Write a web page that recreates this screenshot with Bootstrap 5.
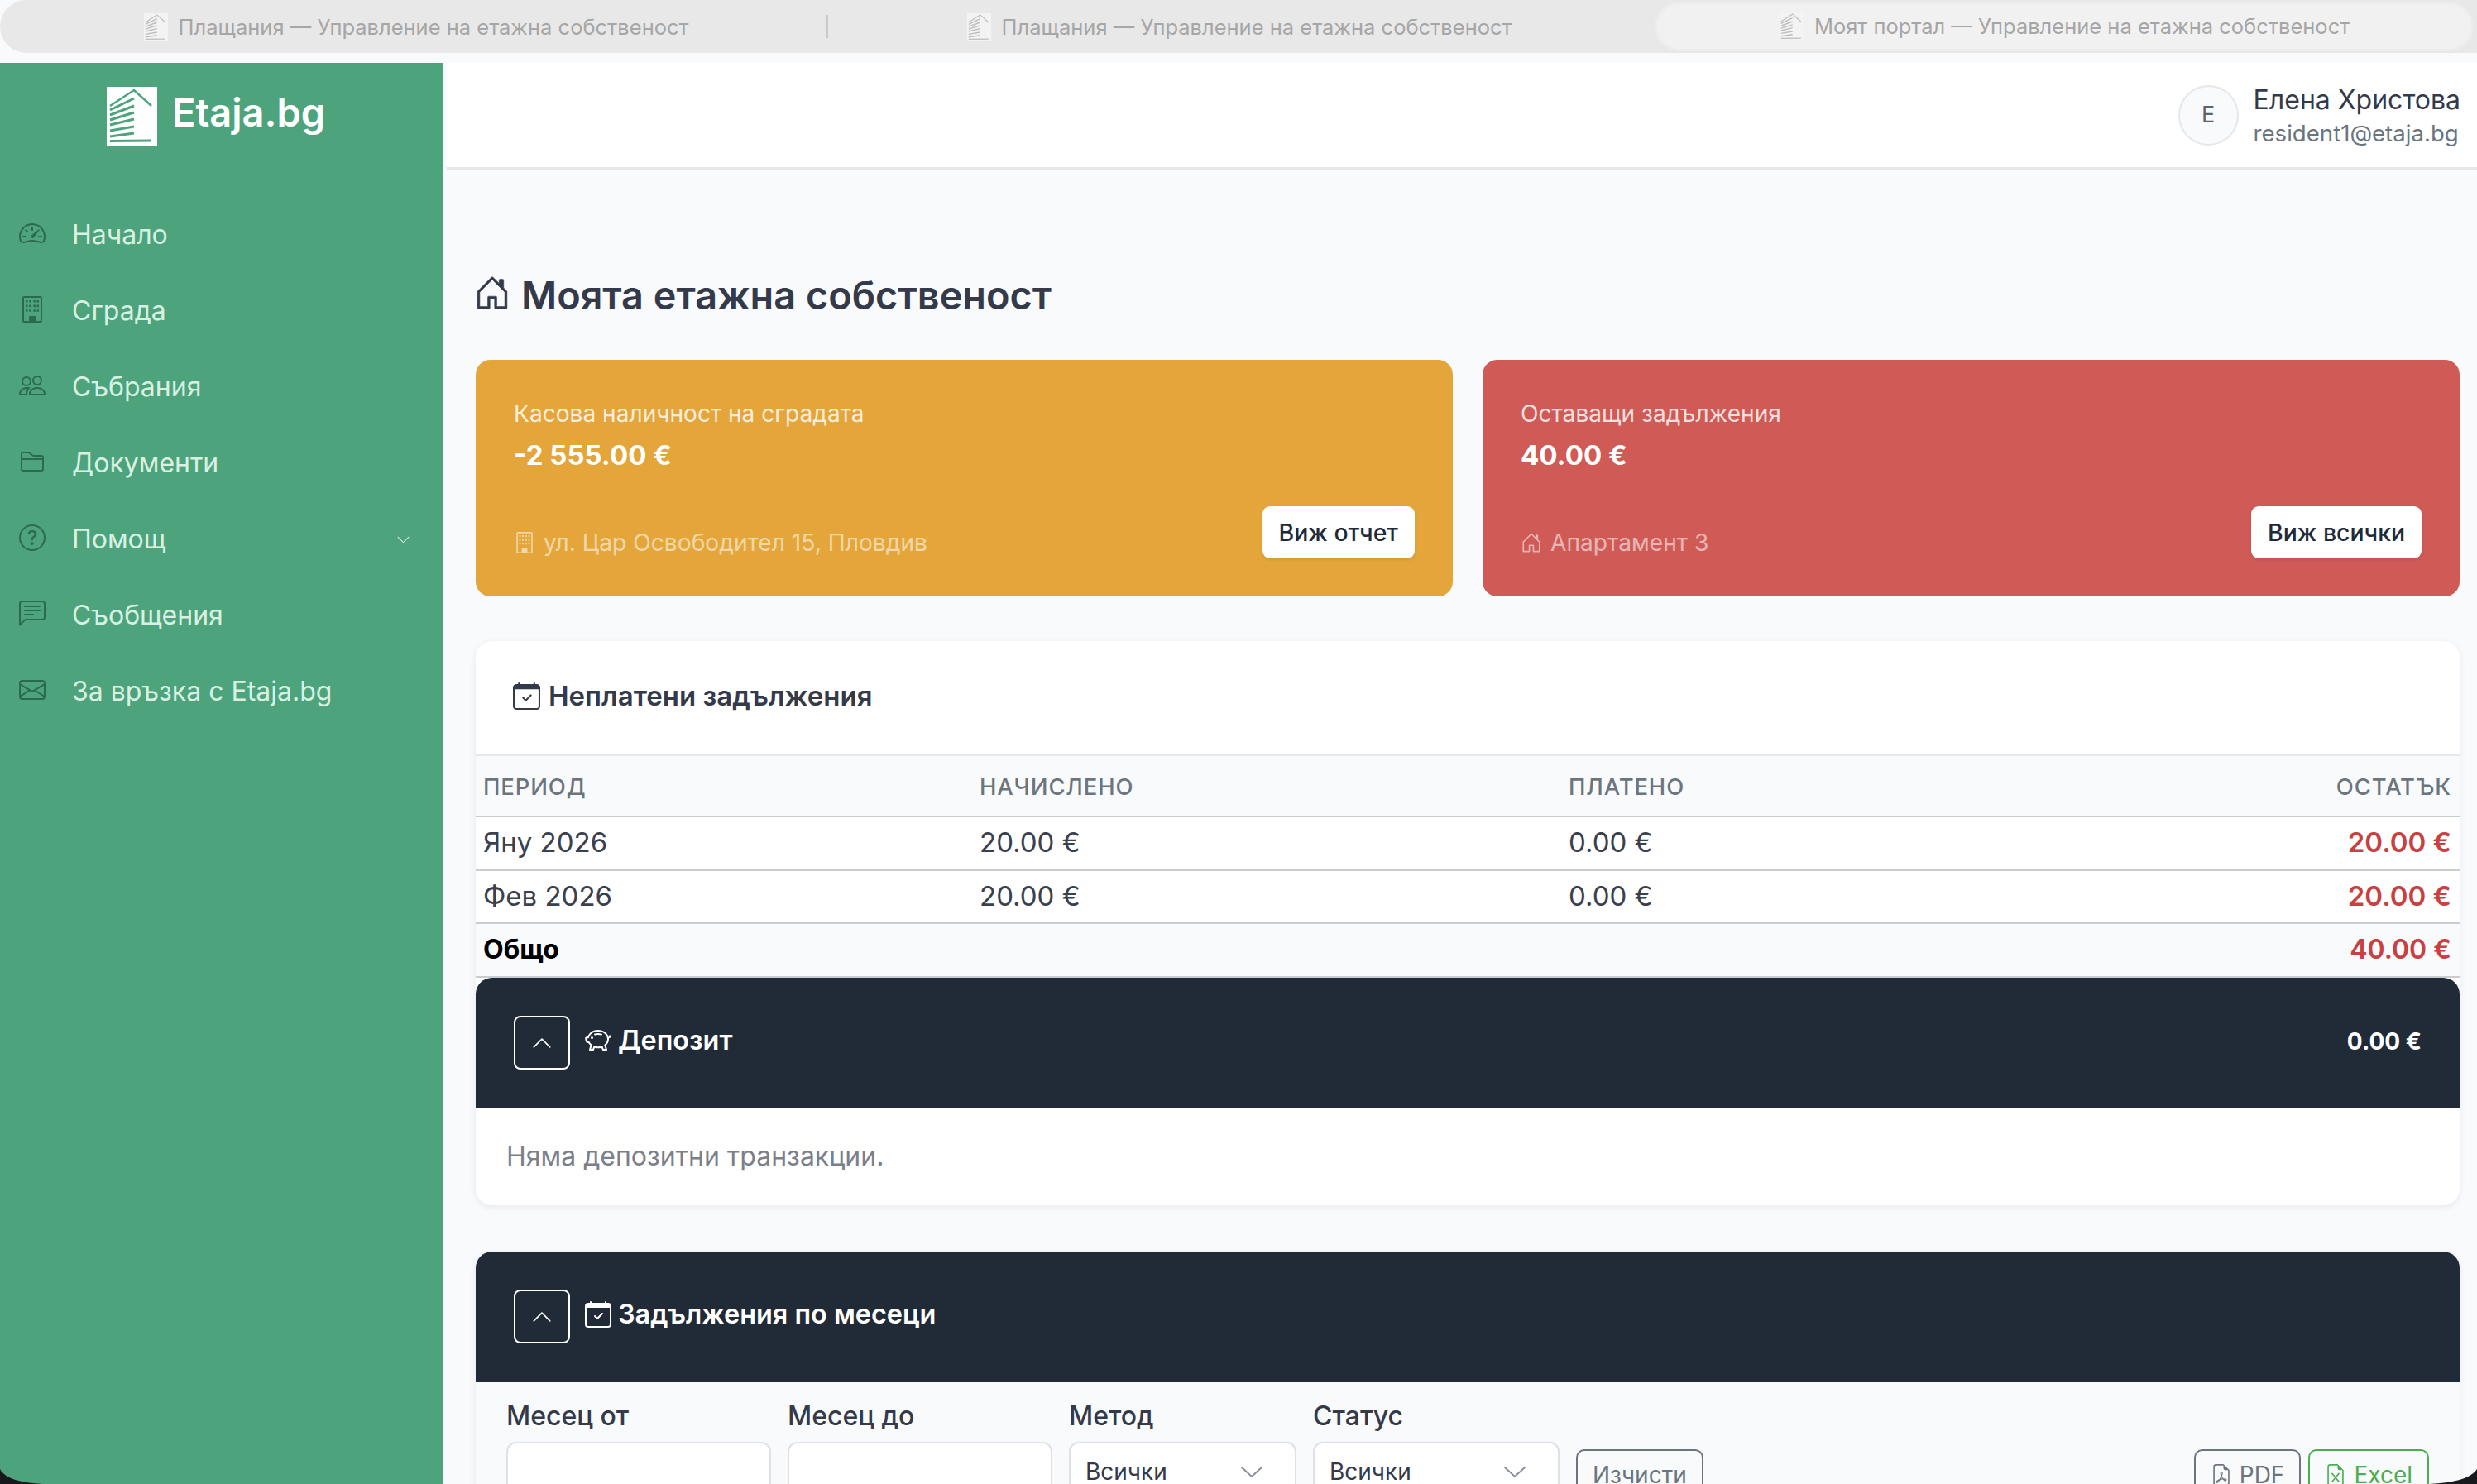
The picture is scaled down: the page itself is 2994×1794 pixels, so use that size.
<!doctype html>
<html lang="bg"><head><meta charset="utf-8"><title>Моят портал</title>
<link href="https://cdn.jsdelivr.net/npm/bootstrap@5.3.0/dist/css/bootstrap.min.css" rel="stylesheet">
<style>
html,body{margin:0;height:1794px;overflow:hidden}
body{font-family:Inter,"Noto Sans",sans-serif;font-size:30px;color:#343a4a;background:#f8fafc;width:2994px;position:relative}
svg{display:block;flex:none}
.tabbar{height:64px;background:#e8e8e8;border-radius:32px 0 0 32px;color:#a6a6a6;font-size:25.5px;padding-right:4px}
.tabx{flex:1 1 0;min-width:0;gap:12px;height:64px;padding-top:2px}
.tabl{padding-left:6px}.tabm{padding-right:6px}
.tabdiv{width:2px;height:28px;background:#c9c9c9;align-self:center}
.tabx.act{flex:none;width:990px;background:#f1f1f1;border:3px solid #ececec;border-radius:32px;height:60px;margin-top:2px;padding-top:0}
.tabx svg{width:31px;height:34px}
.shell{margin-top:12px;height:1718px}
.side{width:536px;background:#4da37c;margin-right:4px}
.brand{height:120px;gap:18px;padding-left:129px;padding-top:0}
.brand svg{width:61px;height:71px;margin-top:8px}
.brand span{font-size:47px;font-weight:600;color:#fff}
.menu{padding-top:42px}
.menu a{height:92px;color:#d9f1e3;text-decoration:none;padding-left:23px;font-size:32px;gap:32px;padding-right:40px}
.menu svg.ic{width:32px;height:32px;fill:#2c6a4f;margin-top:-4px}
.menu svg.cv{width:17px;height:17px;fill:#d9f1e3;margin-left:auto}
.mainc{min-width:0}
.topb{height:129px;background:#fff;border-bottom:3px solid #e6e8ec;padding-right:20px;gap:18px}
.avat{width:73px;height:73px;border:2px solid #e4e7eb;border-radius:50%;background:#f8fafc;color:#5d6470;font-size:27px}
.uname{font-size:32px;line-height:41px;margin-top:2px}
.umail{font-size:27.6px;line-height:40px;color:#6c757d}
.content{padding:0 21px 0 35px}
.ptitle{font-size:46.8px;font-weight:600;margin:0;height:230px;gap:13px;padding-top:74px;color:#343a4a}
.ptitle svg{width:44px;height:44px;fill:#343a4a;stroke:#343a4a;stroke-width:.2;margin-left:-2px;margin-top:-6px}
.kcol{gap:36px;height:286px}
.kcard{flex:1 1 0;border-radius:18px;color:#fff;padding:47px 46px 46px;position:relative}
.kyel{background:#e4a63a}.kred{background:#cf5a56}
.klab{font-size:28.1px;line-height:36px;opacity:.8}
.kval{font-size:33px;font-weight:700;line-height:44px;margin-top:10px}
.kfoot{margin-top:auto;margin-bottom:-2px;font-size:28.2px;opacity:.55;gap:10px}
.kfoot svg{width:26px;height:26px;fill:#fff}
.kbtn{background:#fff;color:#212a37;font-size:28.4px;font-weight:500;border:0;border-radius:9px;padding:0 20px;height:63px;line-height:63px;position:absolute;right:46px;bottom:46px;box-shadow:0 2px 4px rgba(0,0,0,.08)}
.dcard{margin-top:54px;border:0;border-radius:20px;background:#fff;box-shadow:0 2px 8px rgba(30,40,60,.08);--bs-card-bg:#fff}
.dhead{height:139px;padding:0 45px 4px;font-size:33px;font-weight:600;gap:10px;color:#343a4a;border-bottom:2px solid #e6e8ec}
.dhead svg{width:33px;height:33px;fill:#343a4a}
.ttbl{margin:0;--bs-table-bg:transparent;font-size:33px;color:#3a404e}
.ttbl th,.ttbl td{padding:0 10px 1px 9px;vertical-align:middle;border-bottom:2px solid #c9ccd1;height:64.5px}
.ttbl thead th{height:73px;padding:3px 10px 0 9px;background:#f8fafc;color:#6c757d;font-size:27.4px;font-weight:500;letter-spacing:.9px;text-transform:uppercase}
.ttbl thead tr{border-bottom:2px solid #c9ccd1}
.ttbl .dbt{color:#c8403f;font-weight:600}
.ttbl tfoot td{background:#f8fafc;font-weight:700;color:#000;font-size:32px}
.c1{width:600px}.c2{width:712px}
.hdark{background:#212a37;color:#fff;height:158px;padding:0 46px;border-radius:20px 20px 0 0;gap:18px;font-size:32.4px;font-weight:600}
.hdark>span{margin-top:-4px}
.hdark .tog{width:68px;height:65px;border:2px solid #fff;border-radius:8px;background:transparent;padding:0;margin-right:0}
.hdark .tog svg{width:26px;height:26px;fill:#fff}
.hdark .hico{width:32px;height:32px;fill:#fff;margin-right:-10px;margin-top:-5px}
.hdark .hamt{font-size:28px;font-weight:700;margin-left:auto;margin-top:-4px}
.dmpty{height:117px;padding:0 37px 0;color:#7a808a;font-size:32px}
.sec2{margin-top:56px;background:#f8fafc;border-radius:20px 20px 0 0;box-shadow:0 2px 8px rgba(30,40,60,.08)}
.filt{padding:20px 37px 0 37px;gap:20px;align-items:flex-start}
.filt label{display:block;font-size:32px;font-weight:500;line-height:42px;margin-bottom:10px;color:#343a4a}
.filt .form-control{width:320px;height:74px;border:2px solid #dee2e6;border-radius:12px;box-shadow:none}
.filt .form-select{height:72px;margin-top:2px;font-size:28px;border:2px solid #dee2e6;border-radius:12px;color:#343a4a;padding:0 60px 0 18px;background-size:28px 20px;background-position:right 38px center;background-image:url("data:image/svg+xml,%3csvg xmlns='http://www.w3.org/2000/svg' viewBox='0 0 28 20'%3e%3cpath fill='none' stroke='%238a9099' stroke-width='2' stroke-linecap='round' d='M2 5l12 11 12-11'/%3e%3c/svg%3e");box-shadow:0 -1px 1px rgba(0,0,0,.03)}
.wmet{width:275px}.wsta{width:298px}
.fbtn{height:65px;margin-top:61px;font-size:28px;border-width:2px;border-radius:10px;padding:0 18px 2px;gap:9px;background:transparent}
.fbtn svg{width:26px;height:26px;fill:currentColor}
.bgr{color:#6c757d;border-color:#6c757d}
.bex{color:#4cae50;border-color:#4cae50}
.pushr{margin-left:auto}
.tightl{margin-left:-11px}
.corner{position:absolute;width:60px;height:18px;bottom:0;fill:#17191c}
.cleft{left:0}.cright{right:0}
</style></head><body>
<svg width="0" height="0" style="position:absolute">
<defs>
<symbol id="lg" viewBox="0 0 61 71"><rect width="61" height="71" fill="#fff"/><g stroke="#4da37c" fill="none"><path d="M4 23 33 4 54 23" stroke-width="2.5"/><path d="M4 28 33 14M4 34 33 23M4 40 33 31M4 46 33 39M4 53 33 48M4 60 33 56" stroke-width="3"/><path d="M4 65.500 54 65" stroke-width="3"/></g></symbol>
<symbol id="lgt" viewBox="0 0 61 71"><rect width="61" height="71" fill="#f3f3f3"/><g stroke="#bdbdbd" fill="none"><path d="M4 23 33 4 54 23" stroke-width="2.500"/><path d="M4 28 33 14M4 34 33 23M4 40 33 31M4 46 33 39M4 53 33 48M4 60 33 56" stroke-width="3"/><path d="M4 65.500 54 65" stroke-width="3"/></g></symbol>
<symbol id="bld" viewBox="0 0 16 16"><path d="M2 1a1 1 0 0 1 1-1h10a1 1 0 0 1 1 1v14a1 1 0 0 1-1 1H3a1 1 0 0 1-1-1V1Zm11 0H3v14h3v-2.500a.5.5 0 0 1 .5-.5h3a.5.5 0 0 1 .5.5V15h3V1Z"/><path d="M6 12.500h4V15.500H6zM4 2.500v1.300h1.200V2.500zM6.100 2.500v1.300h1.200V2.500zM8.700 2.500v1.300h1.200V2.500zM10.800 2.500v1.300H12V2.500zM4 5.300v1.300h1.200V5.300zM6.100 5.300v1.300h1.200V5.300zM8.700 5.300v1.300h1.200V5.300zM10.800 5.300v1.300H12V5.300zM4 8.100v1.300h1.200V8.100zM6.100 8.100v1.300h1.200V8.100zM8.700 8.100v1.300h1.200V8.100zM10.800 8.100v1.300H12V8.100z"/></symbol>
<symbol id="hdoor" viewBox="0 0 16 16"><path d="M8.354 1.146a.5.5 0 0 0-.708 0l-6 6A.5.5 0 0 0 1.500 7.500v7a.5.5 0 0 0 .5.5h4.500a.5.5 0 0 0 .5-.5v-4h2v4a.5.5 0 0 0 .5.5H14a.5.5 0 0 0 .5-.5v-7a.5.5 0 0 0-.146-.354L13 5.793V2.500a.5.5 0 0 0-.5-.5h-1a.5.5 0 0 0-.5.5v1.293L8.354 1.146zM2.500 14V7.707l5.500-5.500 5.500 5.500V14H10v-4a.5.5 0 0 0-.5-.5h-3a.5.5 0 0 0-.5.5v4H2.500z"/></symbol>
<symbol id="calc" viewBox="0 0 16 16"><path d="M10.854 7.146a.5.5 0 0 1 0 .708l-3 3a.5.5 0 0 1-.708 0l-1.500-1.500a.5.5 0 1 1 .708-.708L7.500 9.793l2.646-2.647a.5.5 0 0 1 .708 0z"/><path d="M3.500 0a.5.5 0 0 1 .5.5V1h8V.5a.5.5 0 0 1 1 0V1h1a2 2 0 0 1 2 2v11a2 2 0 0 1-2 2H2a2 2 0 0 1-2-2V3a2 2 0 0 1 2-2h1V.5a.5.5 0 0 1 .5-.5zM1 4v10a1 1 0 0 0 1 1h12a1 1 0 0 0 1-1V4H1z"/></symbol>
<symbol id="cup" viewBox="0 0 16 16"><path d="M7.646 4.646a.5.5 0 0 1 .708 0l6 6a.5.5 0 0 1-.708.708L8 5.707l-5.646 5.647a.5.5 0 0 1-.708-.708l6-6z"/></symbol>
</defs></svg>

<div class="tabbar d-flex align-items-stretch">
 <div class="tabx tabl d-flex align-items-center justify-content-center"><svg><use href="#lgt"/></svg><span>Плащания — Управление на етажна собственост</span></div>
 <div class="tabdiv"></div>
 <div class="tabx tabm d-flex align-items-center justify-content-center"><svg><use href="#lgt"/></svg><span>Плащания — Управление на етажна собственост</span></div>
 <div class="tabx act d-flex align-items-center justify-content-center"><svg><use href="#lgt"/></svg><span>Моят портал — Управление на етажна собственост</span></div>
</div>

<div class="shell d-flex">
 <nav class="side flex-shrink-0">
  <div class="brand d-flex align-items-center"><svg><use href="#lg"/></svg><span>Etaja.bg</span></div>
  <div class="menu d-flex flex-column">
   <a href="#" class="d-flex align-items-center"><svg class="ic" viewBox="0 0 16 16"><path d="M8 4a.5.5 0 0 1 .5.5V6a.5.5 0 0 1-1 0V4.500A.5.5 0 0 1 8 4zM3.732 5.732a.5.5 0 0 1 .707 0l.915.914a.5.5 0 1 1-.708.708l-.914-.915a.5.5 0 0 1 0-.707zM2 10a.5.5 0 0 1 .5-.5h1.586a.5.5 0 0 1 0 1H2.500A.5.5 0 0 1 2 10zm9.500 0a.5.5 0 0 1 .5-.5h1.500a.5.5 0 0 1 0 1H12a.5.5 0 0 1-.5-.5zm.754-4.246a.389.389 0 0 0-.527-.02L7.547 9.310a.91.91 0 1 0 1.302 1.258l3.434-4.297a.389.389 0 0 0-.029-.518z"/><path d="M0 10a8 8 0 1 1 15.547 2.661c-.442 1.253-1.845 1.602-2.932 1.250C11.309 13.488 9.475 13 8 13c-1.474 0-3.310.488-4.615.911-1.087.352-2.490.003-2.932-1.250A7.988 7.988 0 0 1 0 10zm8-7a7 7 0 0 0-6.603 9.329c.203.575.923.876 1.680.630C4.397 12.533 6.358 12 8 12s3.604.532 4.923.960c.757.245 1.477-.056 1.680-.631A7 7 0 0 0 8 3z"/></svg><span>Начало</span></a>
   <a href="#" class="d-flex align-items-center"><svg class="ic"><use href="#bld"/></svg><span>Сграда</span></a>
   <a href="#" class="d-flex align-items-center"><svg class="ic" viewBox="0 0 16 16"><path d="M15 14s1 0 1-1-1-4-5-4-5 3-5 4 1 1 1 1h8Zm-7.978-1A.261.261 0 0 1 7 12.996c.001-.264.167-1.030.760-1.720C8.312 10.629 9.282 10 11 10c1.717 0 2.687.630 3.240 1.276.593.690.758 1.457.760 1.720l-.008.002a.274.274 0 0 1-.014.002H7.022ZM11 7a2 2 0 1 0 0-4 2 2 0 0 0 0 4Zm3-2a3 3 0 1 1-6 0 3 3 0 0 1 6 0ZM6.936 9.280a5.880 5.880 0 0 0-1.230-.247A7.350 7.350 0 0 0 5 9c-4 0-5 3-5 4 0 .667.333 1 1 1h4.216A2.238 2.238 0 0 1 5 13c0-1.010.377-2.042 1.090-2.904.243-.294.526-.569.846-.816ZM4.920 10A5.493 5.493 0 0 0 4 13H1c0-.260.164-1.030.760-1.724.545-.636 1.492-1.256 3.160-1.275ZM1.500 5.500a3 3 0 1 1 6 0 3 3 0 0 1-6 0Zm3-2a2 2 0 1 0 0 4 2 2 0 0 0 0-4Z"/></svg><span>Събрания</span></a>
   <a href="#" class="d-flex align-items-center"><svg class="ic" viewBox="0 0 16 16"><path d="M1 3.500A1.500 1.500 0 0 1 2.500 2h2.764c.958 0 1.760.56 2.311 1.184C7.985 3.648 8.480 4 9 4h4.500A1.500 1.500 0 0 1 15 5.500v7a1.500 1.500 0 0 1-1.500 1.500h-11A1.500 1.500 0 0 1 1 12.500v-9zM2.500 3a.5.5 0 0 0-.5.5V6h12v-.5a.5.5 0 0 0-.5-.5H9c-.964 0-1.710-.629-2.174-1.154C6.374 3.334 5.820 3 5.264 3H2.500zM14 7H2v5.500a.5.5 0 0 0 .5.5h11a.5.5 0 0 0 .5-.5V7z"/></svg><span>Документи</span></a>
   <a href="#" class="d-flex align-items-center"><svg class="ic" viewBox="0 0 16 16"><path d="M8 15A7 7 0 1 1 8 1a7 7 0 0 1 0 14zm0 1A8 8 0 1 0 8 0a8 8 0 0 0 0 16z"/><path d="M5.255 5.786a.237.237 0 0 0 .241.247h.825c.138 0 .248-.113.266-.250.090-.656.540-1.134 1.342-1.134.686 0 1.314.343 1.314 1.168 0 .635-.374.927-.965 1.371-.673.489-1.206 1.060-1.168 1.987l.003.217a.250.250 0 0 0 .250.246h.811a.250.250 0 0 0 .250-.250v-.105c0-.718.273-.927 1.010-1.486.609-.463 1.244-.977 1.244-2.056 0-1.511-1.276-2.241-2.673-2.241-1.267 0-2.655.590-2.750 2.286zm1.557 5.763c0 .533.425.927 1.010.927.609 0 1.028-.394 1.028-.927 0-.552-.420-.940-1.029-.940-.584 0-1.009.388-1.009.940z"/></svg><span>Помощ</span><svg class="cv" viewBox="0 0 16 16"><path d="M1.646 4.646a.5.5 0 0 1 .708 0L8 10.293l5.646-5.647a.5.5 0 0 1 .708.708l-6 6a.5.5 0 0 1-.708 0l-6-6a.5.5 0 0 1 0-.708z"/></svg></a>
   <a href="#" class="d-flex align-items-center"><svg class="ic" viewBox="0 0 16 16"><path d="M14 1a1 1 0 0 1 1 1v8a1 1 0 0 1-1 1H4.414A2 2 0 0 0 3 11.586l-2 2V2a1 1 0 0 1 1-1h12zM2 0a2 2 0 0 0-2 2v12.793a.5.5 0 0 0 .854.353l2.853-2.853A1 1 0 0 1 4.414 12H14a2 2 0 0 0 2-2V2a2 2 0 0 0-2-2H2z"/><path d="M3 3.500a.5.5 0 0 1 .5-.5h9a.5.5 0 0 1 0 1h-9a.5.5 0 0 1-.5-.5zM3 6a.5.5 0 0 1 .5-.5h9a.5.5 0 0 1 0 1h-9A.5.5 0 0 1 3 6zm0 2.500a.5.5 0 0 1 .5-.5h5a.5.5 0 0 1 0 1h-5a.5.5 0 0 1-.5-.5z"/></svg><span>Съобщения</span></a>
   <a href="#" class="d-flex align-items-center"><svg class="ic" viewBox="0 0 16 16"><path d="M0 4a2 2 0 0 1 2-2h12a2 2 0 0 1 2 2v8a2 2 0 0 1-2 2H2a2 2 0 0 1-2-2V4Zm2-1a1 1 0 0 0-1 1v.217l7 4.200 7-4.200V4a1 1 0 0 0-1-1H2Zm13 2.383-4.708 2.825L15 11.105V5.383Zm-.034 6.876-5.640-3.471L8 9.583l-1.326-.795-5.640 3.470A1 1 0 0 0 2 13h12a1 1 0 0 0 .966-.741ZM1 11.105l4.708-2.897L1 5.383v5.722Z"/></svg><span>За връзка с Etaja.bg</span></a>
  </div>
 </nav>
 <div class="mainc flex-grow-1">
  <header class="topb d-flex align-items-center justify-content-end">
   <div class="avat d-flex align-items-center justify-content-center">E</div>
   <div><div class="uname">Елена Христова</div><div class="umail">resident1@etaja.bg</div></div>
  </header>
  <main class="content">
   <h1 class="ptitle d-flex align-items-center"><svg><use href="#hdoor"/></svg><span>Моята етажна собственост</span></h1>
   <div class="kcol d-flex">
    <div class="kcard kyel d-flex flex-column">
     <div class="klab">Касова наличност на сградата</div>
     <div class="kval">-2 555.00 €</div>
     <div class="kfoot d-flex align-items-center"><svg><use href="#bld"/></svg><span>ул. Цар Освободител 15, Пловдив</span></div>
     <button class="kbtn">Виж отчет</button>
    </div>
    <div class="kcard kred d-flex flex-column">
     <div class="klab">Оставащи задължения</div>
     <div class="kval">40.00 €</div>
     <div class="kfoot d-flex align-items-center"><svg><use href="#hdoor"/></svg><span>Апартамент 3</span></div>
     <button class="kbtn">Виж всички</button>
    </div>
   </div>
   <section class="card dcard">
    <div class="dhead d-flex align-items-center"><svg><use href="#calc"/></svg><span>Неплатени задължения</span></div>
    <table class="table ttbl">
     <thead><tr><th class="c1">Период</th><th class="c2">Начислено</th><th>Платено</th><th class="text-end">Остатък</th></tr></thead>
     <tbody><tr><td>Яну 2026</td><td>20.00 €</td><td>0.00 €</td><td class="text-end dbt">20.00 €</td></tr>
     <tr><td>Фев 2026</td><td>20.00 €</td><td>0.00 €</td><td class="text-end dbt">20.00 €</td></tr></tbody>
     <tfoot><tr><td>Общо</td><td></td><td></td><td class="text-end dbt">40.00 €</td></tr></tfoot>
    </table>
    <div class="hdark d-flex align-items-center">
     <button class="tog d-flex align-items-center justify-content-center"><svg><use href="#cup"/></svg></button>
     <svg class="hico" viewBox="0 0 16 16"><path d="M5 6.250a.75.75 0 1 1-1.500 0 .75.75 0 0 1 1.500 0zm1.138-1.496A6.613 6.613 0 0 1 7.964 4.500c.666 0 1.303.097 1.893.273a.5.5 0 0 0 .286-.958A7.602 7.602 0 0 0 7.964 3.500c-.734 0-1.441.103-2.102.292a.5.5 0 1 0 .276.962z"/><path d="M7.964 1.527c-2.977 0-5.571 1.704-6.320 4.125h-.55A1 1 0 0 0 .11 6.824l.254 1.460a1.500 1.500 0 0 0 1.478 1.243h.263c.3.513.688.978 1.145 1.382l-.729 2.477a.5.5 0 0 0 .48.641h2a.5.5 0 0 0 .471-.332l.482-1.351c.635.173 1.310.267 2.011.267.707 0 1.388-.095 2.028-.272l.543 1.372a.5.5 0 0 0 .465.316h2a.5.5 0 0 0 .478-.645l-.761-2.506C13.810 9.895 14.500 8.559 14.500 7.069c0-.145-.007-.29-.02-.431.261-.11.508-.266.705-.444.315.306.815.306.815-.417 0 .223-.5.223-.461-.026a.950.950 0 0 0 .090-.255.700.700 0 0 0-.202-.645.580.580 0 0 0-.707-.098.735.735 0 0 0-.375.562c-.024.243.082.480.320.654a2.112 2.112 0 0 1-.259.153c-.534-2.664-3.284-4.595-6.442-4.595zM2.516 6.260c.455-2.066 2.667-3.733 5.448-3.733 3.146 0 5.536 2.114 5.536 4.542 0 1.254-.624 2.410-1.670 3.248a.5.5 0 0 0-.165.535l.66 2.175h-.985l-.59-1.487a.5.5 0 0 0-.629-.288c-.661.230-1.390.359-2.157.359a6.558 6.558 0 0 1-2.157-.359.5.5 0 0 0-.635.304l-.525 1.471h-.979l.633-2.150a.5.5 0 0 0-.170-.534 4.649 4.649 0 0 1-1.284-1.541.5.5 0 0 0-.446-.275h-.56a.5.5 0 0 1-.492-.414l-.254-1.460h.933a.5.5 0 0 0 .488-.393z"/></svg>
     <span>Депозит</span><span class="hamt">0.00 €</span>
    </div>
    <div class="dmpty d-flex align-items-center">Няма депозитни транзакции.</div>
   </section>
   <section class="sec2">
    <div class="hdark d-flex align-items-center">
     <button class="tog d-flex align-items-center justify-content-center"><svg><use href="#cup"/></svg></button>
     <svg class="hico"><use href="#calc"/></svg>
     <span>Задължения по месеци</span>
    </div>
    <form class="filt d-flex">
     <div><label for="m1">Месец от</label><input id="m1" class="form-control" type="text"></div>
     <div><label for="m2">Месец до</label><input id="m2" class="form-control" type="text"></div>
     <div class="wmet"><label for="m3">Метод</label><select id="m3" class="form-select"><option>Всички</option></select></div>
     <div class="wsta"><label for="m4">Статус</label><select id="m4" class="form-select"><option>Всички</option></select></div>
     <button type="button" class="btn fbtn bgr d-flex align-items-center">Изчисти</button>
     <button type="button" class="btn fbtn bgr d-flex align-items-center pushr"><svg viewBox="0 0 16 16"><path d="M14 14V4.500L9.500 0H4a2 2 0 0 0-2 2v12a2 2 0 0 0 2 2h8a2 2 0 0 0 2-2zM9.500 3A1.500 1.500 0 0 0 11 4.500h2V14a1 1 0 0 1-1 1H4a1 1 0 0 1-1-1V2a1 1 0 0 1 1-1h5.500v2z"/><path d="M4.603 14.087a.81.81 0 0 1-.438-.42c-.195-.388-.13-.776.08-1.102.198-.307.526-.568.897-.787a7.680 7.680 0 0 1 1.482-.645 19.701 19.701 0 0 0 1.062-2.227 7.269 7.269 0 0 1-.43-1.295c-.086-.4-.119-.796-.046-1.136.075-.354.274-.672.65-.823.192-.077.4-.12.602-.077a.7.7 0 0 1 .477.365c.088.164.12.356.127.538.007.188-.012.396-.047.614-.084.51-.27 1.134-.52 1.794a10.954 10.954 0 0 0 .98 1.686 5.753 5.753 0 0 1 1.334.05c.364.066.734.195.96.465.12.144.193.320.2.518.007.192-.047.382-.138.563a1.040 1.040 0 0 1-.354.416.856.856 0 0 1-.51.138c-.331-.014-.654-.196-.933-.417a5.712 5.712 0 0 1-.911-.95 11.650 11.650 0 0 0-1.997.406 11.307 11.307 0 0 1-1.020 1.510c-.292.350-.609.656-.927.787a.793.793 0 0 1-.58.029zm1.379-1.901c-.166.076-.32.156-.459.238-.328.194-.541.383-.647.547-.094.145-.096.25-.04.361.01.022.02.036.026.044a.266.266 0 0 0 .035-.012c.137-.056.355-.235.635-.572a8.180 8.180 0 0 0 .45-.606zm1.640-1.330a12.710 12.710 0 0 1 1.010-.193 11.744 11.744 0 0 1-.51-.858 20.801 20.801 0 0 1-.5 1.050zm2.446.450c.150.163.296.300.435.410.240.190.407.253.498.256a.107.107 0 0 0 .070-.015.307.307 0 0 0 .094-.125.436.436 0 0 0 .059-.200.095.095 0 0 0-.026-.063c-.052-.062-.200-.152-.518-.209a3.876 3.876 0 0 0-.612-.053zM8.078 7.800a6.700 6.700 0 0 0 .200-.828c.031-.188.043-.343.038-.465a.613.613 0 0 0-.032-.198.517.517 0 0 0-.145.040c-.087.035-.158.106-.196.283-.040.192-.030.469.046.822.024.111.054.227.090.346z"/></svg>PDF</button>
     <button type="button" class="btn fbtn bex d-flex align-items-center tightl"><svg viewBox="0 0 16 16"><path d="M5.884 6.680a.5.5 0 1 0-.768.640L7.349 10l-2.233 2.680a.5.5 0 0 0 .768.640L8 10.781l2.116 2.540a.5.5 0 0 0 .768-.641L8.651 10l2.233-2.680a.5.5 0 0 0-.768-.640L8 9.219l-2.116-2.540z"/><path d="M14 14V4.500L9.500 0H4a2 2 0 0 0-2 2v12a2 2 0 0 0 2 2h8a2 2 0 0 0 2-2zM9.500 3A1.500 1.500 0 0 0 11 4.500h2V14a1 1 0 0 1-1 1H4a1 1 0 0 1-1-1V2a1 1 0 0 1 1-1h5.500v2z"/></svg>Excel</button>
    </form>
   </section>
  </main>
 </div>
</div>
<svg class="corner cleft" viewBox="0 0 60 18"><path d="M0 0Q8 16 52 18H0Z"/></svg>
<svg class="corner cright" viewBox="0 0 60 18"><path d="M60 0Q50 16 2 18H60Z"/></svg>
<script src="https://cdn.jsdelivr.net/npm/bootstrap@5.3.0/dist/js/bootstrap.bundle.min.js"></script>
</body></html>
